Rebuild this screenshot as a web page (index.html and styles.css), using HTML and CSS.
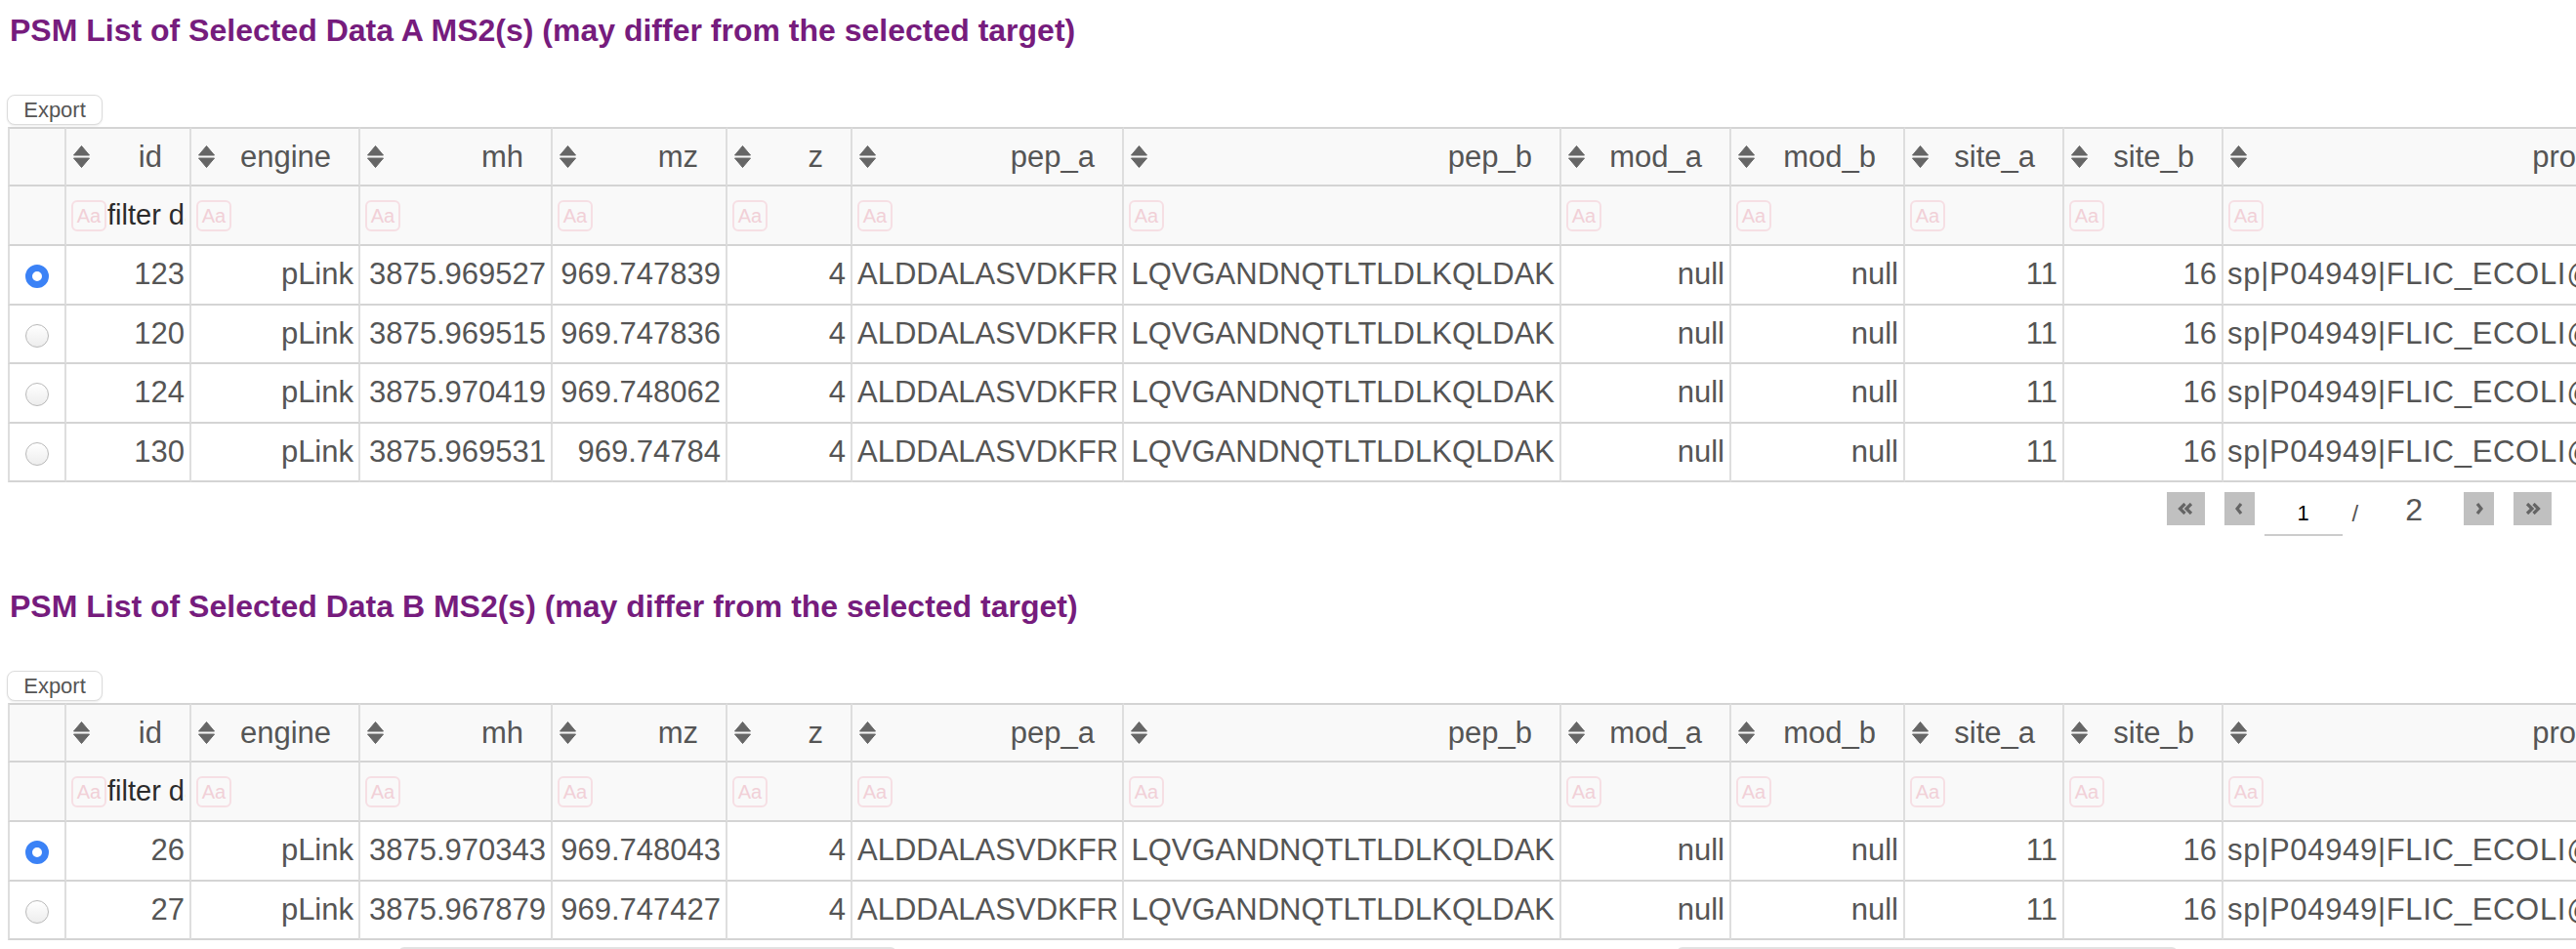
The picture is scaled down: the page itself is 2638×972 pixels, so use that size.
FILE: index.html
```html
<!DOCTYPE html>
<html>
<head>
<meta charset="utf-8">
<title>PSM List</title>
<link rel="stylesheet" href="styles.css">
</head>
<body>

<section class="panel">
  <h4 class="panel-title">PSM List of Selected Data A MS2(s) (may differ from the selected target)</h4>
  <button class="export-btn">Export</button>
  <div class="table-wrap">
    <table class="psm">
      <colgroup>
        <col class="c-sel"><col class="c-id"><col class="c-engine"><col class="c-mh"><col class="c-mz"><col class="c-z"><col class="c-pepa"><col class="c-pepb"><col class="c-moda"><col class="c-modb"><col class="c-sitea"><col class="c-siteb"><col class="c-pro">
      </colgroup>
      <thead>
        <tr class="head-row">
          <th></th>
          <th><div class="th-inner"><svg class="sort" viewBox="0 0 19 25"><path d="M9.5 1.5 L17.5 11 L1.5 11 Z"/><path d="M1.5 14 L17.5 14 L9.5 23.5 Z"/></svg><span class="lbl">id</span></div></th>
          <th><div class="th-inner"><svg class="sort" viewBox="0 0 19 25"><path d="M9.5 1.5 L17.5 11 L1.5 11 Z"/><path d="M1.5 14 L17.5 14 L9.5 23.5 Z"/></svg><span class="lbl">engine</span></div></th>
          <th><div class="th-inner"><svg class="sort" viewBox="0 0 19 25"><path d="M9.5 1.5 L17.5 11 L1.5 11 Z"/><path d="M1.5 14 L17.5 14 L9.5 23.5 Z"/></svg><span class="lbl">mh</span></div></th>
          <th><div class="th-inner"><svg class="sort" viewBox="0 0 19 25"><path d="M9.5 1.5 L17.5 11 L1.5 11 Z"/><path d="M1.5 14 L17.5 14 L9.5 23.5 Z"/></svg><span class="lbl">mz</span></div></th>
          <th><div class="th-inner"><svg class="sort" viewBox="0 0 19 25"><path d="M9.5 1.5 L17.5 11 L1.5 11 Z"/><path d="M1.5 14 L17.5 14 L9.5 23.5 Z"/></svg><span class="lbl">z</span></div></th>
          <th><div class="th-inner"><svg class="sort" viewBox="0 0 19 25"><path d="M9.5 1.5 L17.5 11 L1.5 11 Z"/><path d="M1.5 14 L17.5 14 L9.5 23.5 Z"/></svg><span class="lbl">pep_a</span></div></th>
          <th><div class="th-inner"><svg class="sort" viewBox="0 0 19 25"><path d="M9.5 1.5 L17.5 11 L1.5 11 Z"/><path d="M1.5 14 L17.5 14 L9.5 23.5 Z"/></svg><span class="lbl">pep_b</span></div></th>
          <th><div class="th-inner"><svg class="sort" viewBox="0 0 19 25"><path d="M9.5 1.5 L17.5 11 L1.5 11 Z"/><path d="M1.5 14 L17.5 14 L9.5 23.5 Z"/></svg><span class="lbl">mod_a</span></div></th>
          <th><div class="th-inner"><svg class="sort" viewBox="0 0 19 25"><path d="M9.5 1.5 L17.5 11 L1.5 11 Z"/><path d="M1.5 14 L17.5 14 L9.5 23.5 Z"/></svg><span class="lbl">mod_b</span></div></th>
          <th><div class="th-inner"><svg class="sort" viewBox="0 0 19 25"><path d="M9.5 1.5 L17.5 11 L1.5 11 Z"/><path d="M1.5 14 L17.5 14 L9.5 23.5 Z"/></svg><span class="lbl">site_a</span></div></th>
          <th><div class="th-inner"><svg class="sort" viewBox="0 0 19 25"><path d="M9.5 1.5 L17.5 11 L1.5 11 Z"/><path d="M1.5 14 L17.5 14 L9.5 23.5 Z"/></svg><span class="lbl">site_b</span></div></th>
          <th><div class="th-inner"><svg class="sort" viewBox="0 0 19 25"><path d="M9.5 1.5 L17.5 11 L1.5 11 Z"/><path d="M1.5 14 L17.5 14 L9.5 23.5 Z"/></svg><span class="lbl">protein</span></div></th>
        </tr>
        <tr class="filter-row">
          <td></td>
          <td><div class="f-inner"><span class="aa">Aa</span><span class="f-text">filter data...</span></div></td>
          <td><div class="f-inner"><span class="aa">Aa</span></div></td>
          <td><div class="f-inner"><span class="aa">Aa</span></div></td>
          <td><div class="f-inner"><span class="aa">Aa</span></div></td>
          <td><div class="f-inner"><span class="aa">Aa</span></div></td>
          <td><div class="f-inner"><span class="aa">Aa</span></div></td>
          <td><div class="f-inner"><span class="aa">Aa</span></div></td>
          <td><div class="f-inner"><span class="aa">Aa</span></div></td>
          <td><div class="f-inner"><span class="aa">Aa</span></div></td>
          <td><div class="f-inner"><span class="aa">Aa</span></div></td>
          <td><div class="f-inner"><span class="aa">Aa</span></div></td>
          <td><div class="f-inner"><span class="aa">Aa</span></div></td>
        </tr>
      </thead>
      <tbody>
        <tr><td class="sel"><span class="radio on"></span></td><td>123</td><td>pLink</td><td>3875.969527</td><td>969.747839</td><td>4</td><td>ALDDALASVDKFR</td><td>LQVGANDNQTLTLDLKQLDAK</td><td>null</td><td>null</td><td>11</td><td>16</td><td class="pro">sp|P04949|FLIC_ECOLI@sp|P04949|FLIC_ECOLI</td></tr>
        <tr><td class="sel"><span class="radio"></span></td><td>120</td><td>pLink</td><td>3875.969515</td><td>969.747836</td><td>4</td><td>ALDDALASVDKFR</td><td>LQVGANDNQTLTLDLKQLDAK</td><td>null</td><td>null</td><td>11</td><td>16</td><td class="pro">sp|P04949|FLIC_ECOLI@sp|P04949|FLIC_ECOLI</td></tr>
        <tr><td class="sel"><span class="radio"></span></td><td>124</td><td>pLink</td><td>3875.970419</td><td>969.748062</td><td>4</td><td>ALDDALASVDKFR</td><td>LQVGANDNQTLTLDLKQLDAK</td><td>null</td><td>null</td><td>11</td><td>16</td><td class="pro">sp|P04949|FLIC_ECOLI@sp|P04949|FLIC_ECOLI</td></tr>
        <tr><td class="sel"><span class="radio"></span></td><td>130</td><td>pLink</td><td>3875.969531</td><td>969.74784</td><td>4</td><td>ALDDALASVDKFR</td><td>LQVGANDNQTLTLDLKQLDAK</td><td>null</td><td>null</td><td>11</td><td>16</td><td class="pro">sp|P04949|FLIC_ECOLI@sp|P04949|FLIC_ECOLI</td></tr>
      </tbody>
    </table>
  </div>
  <div class="pager">
    <button class="pg-btn pg-wide"><svg class="chev2" viewBox="0 0 16 12"><polyline points="7.5,1 2.5,6 7.5,11"/><polyline points="14,1 9,6 14,11"/></svg></button>
    <button class="pg-btn pg-narrow pg-prev"><svg class="chev1" viewBox="0 0 8 12"><polyline points="6,1 2,6 6,11"/></svg></button>
    <input class="pg-input" type="text" value="1">
    <span class="pg-slash">/</span>
    <span class="pg-total">2</span>
    <button class="pg-btn pg-narrow pg-next"><svg class="chev1" viewBox="0 0 8 12"><polyline points="2,1 6,6 2,11"/></svg></button>
    <button class="pg-btn pg-wide pg-last"><svg class="chev2" viewBox="0 0 16 12"><polyline points="2,1 7,6 2,11"/><polyline points="8.5,1 13.5,6 8.5,11"/></svg></button>
  </div>
</section>

<section class="panel panel-b">
  <h4 class="panel-title">PSM List of Selected Data B MS2(s) (may differ from the selected target)</h4>
  <button class="export-btn">Export</button>
  <div class="table-wrap">
    <table class="psm">
      <colgroup>
        <col class="c-sel"><col class="c-id"><col class="c-engine"><col class="c-mh"><col class="c-mz"><col class="c-z"><col class="c-pepa"><col class="c-pepb"><col class="c-moda"><col class="c-modb"><col class="c-sitea"><col class="c-siteb"><col class="c-pro">
      </colgroup>
      <thead>
        <tr class="head-row">
          <th></th>
          <th><div class="th-inner"><svg class="sort" viewBox="0 0 19 25"><path d="M9.5 1.5 L17.5 11 L1.5 11 Z"/><path d="M1.5 14 L17.5 14 L9.5 23.5 Z"/></svg><span class="lbl">id</span></div></th>
          <th><div class="th-inner"><svg class="sort" viewBox="0 0 19 25"><path d="M9.5 1.5 L17.5 11 L1.5 11 Z"/><path d="M1.5 14 L17.5 14 L9.5 23.5 Z"/></svg><span class="lbl">engine</span></div></th>
          <th><div class="th-inner"><svg class="sort" viewBox="0 0 19 25"><path d="M9.5 1.5 L17.5 11 L1.5 11 Z"/><path d="M1.5 14 L17.5 14 L9.5 23.5 Z"/></svg><span class="lbl">mh</span></div></th>
          <th><div class="th-inner"><svg class="sort" viewBox="0 0 19 25"><path d="M9.5 1.5 L17.5 11 L1.5 11 Z"/><path d="M1.5 14 L17.5 14 L9.5 23.5 Z"/></svg><span class="lbl">mz</span></div></th>
          <th><div class="th-inner"><svg class="sort" viewBox="0 0 19 25"><path d="M9.5 1.5 L17.5 11 L1.5 11 Z"/><path d="M1.5 14 L17.5 14 L9.5 23.5 Z"/></svg><span class="lbl">z</span></div></th>
          <th><div class="th-inner"><svg class="sort" viewBox="0 0 19 25"><path d="M9.5 1.5 L17.5 11 L1.5 11 Z"/><path d="M1.5 14 L17.5 14 L9.5 23.5 Z"/></svg><span class="lbl">pep_a</span></div></th>
          <th><div class="th-inner"><svg class="sort" viewBox="0 0 19 25"><path d="M9.5 1.5 L17.5 11 L1.5 11 Z"/><path d="M1.5 14 L17.5 14 L9.5 23.5 Z"/></svg><span class="lbl">pep_b</span></div></th>
          <th><div class="th-inner"><svg class="sort" viewBox="0 0 19 25"><path d="M9.5 1.5 L17.5 11 L1.5 11 Z"/><path d="M1.5 14 L17.5 14 L9.5 23.5 Z"/></svg><span class="lbl">mod_a</span></div></th>
          <th><div class="th-inner"><svg class="sort" viewBox="0 0 19 25"><path d="M9.5 1.5 L17.5 11 L1.5 11 Z"/><path d="M1.5 14 L17.5 14 L9.5 23.5 Z"/></svg><span class="lbl">mod_b</span></div></th>
          <th><div class="th-inner"><svg class="sort" viewBox="0 0 19 25"><path d="M9.5 1.5 L17.5 11 L1.5 11 Z"/><path d="M1.5 14 L17.5 14 L9.5 23.5 Z"/></svg><span class="lbl">site_a</span></div></th>
          <th><div class="th-inner"><svg class="sort" viewBox="0 0 19 25"><path d="M9.5 1.5 L17.5 11 L1.5 11 Z"/><path d="M1.5 14 L17.5 14 L9.5 23.5 Z"/></svg><span class="lbl">site_b</span></div></th>
          <th><div class="th-inner"><svg class="sort" viewBox="0 0 19 25"><path d="M9.5 1.5 L17.5 11 L1.5 11 Z"/><path d="M1.5 14 L17.5 14 L9.5 23.5 Z"/></svg><span class="lbl">protein</span></div></th>
        </tr>
        <tr class="filter-row">
          <td></td>
          <td><div class="f-inner"><span class="aa">Aa</span><span class="f-text">filter data...</span></div></td>
          <td><div class="f-inner"><span class="aa">Aa</span></div></td>
          <td><div class="f-inner"><span class="aa">Aa</span></div></td>
          <td><div class="f-inner"><span class="aa">Aa</span></div></td>
          <td><div class="f-inner"><span class="aa">Aa</span></div></td>
          <td><div class="f-inner"><span class="aa">Aa</span></div></td>
          <td><div class="f-inner"><span class="aa">Aa</span></div></td>
          <td><div class="f-inner"><span class="aa">Aa</span></div></td>
          <td><div class="f-inner"><span class="aa">Aa</span></div></td>
          <td><div class="f-inner"><span class="aa">Aa</span></div></td>
          <td><div class="f-inner"><span class="aa">Aa</span></div></td>
          <td><div class="f-inner"><span class="aa">Aa</span></div></td>
        </tr>
      </thead>
      <tbody>
        <tr><td class="sel"><span class="radio on"></span></td><td>26</td><td>pLink</td><td>3875.970343</td><td>969.748043</td><td>4</td><td>ALDDALASVDKFR</td><td>LQVGANDNQTLTLDLKQLDAK</td><td>null</td><td>null</td><td>11</td><td>16</td><td class="pro">sp|P04949|FLIC_ECOLI@sp|P04949|FLIC_ECOLI</td></tr>
        <tr><td class="sel"><span class="radio"></span></td><td>27</td><td>pLink</td><td>3875.967879</td><td>969.747427</td><td>4</td><td>ALDDALASVDKFR</td><td>LQVGANDNQTLTLDLKQLDAK</td><td>null</td><td>null</td><td>11</td><td>16</td><td class="pro">sp|P04949|FLIC_ECOLI@sp|P04949|FLIC_ECOLI</td></tr>
      </tbody>
    </table>
  </div>
  <div class="below">
    <div class="below-box box-1"></div>
    <div class="below-box box-2"></div>
  </div>
</section>

</body>
</html>
```

FILE: styles.css
```css
html, body {
  margin: 0;
  padding: 0;
  background: #ffffff;
}

body {
  padding-left: 8px;
  font-family: "Liberation Sans", Arial, Helvetica, sans-serif;
  color: #555555;
  overflow: hidden;
}

.panel-title {
  margin: 12px 0 0 2px;
  font-size: 32px;
  line-height: 38px;
  font-weight: bold;
  color: #761c7d;
  white-space: nowrap;
}

.panel-b {
  margin-top: 52px;
}

.export-btn {
  display: block;
  margin: 47px 0 0 -1px;
  width: 98px;
  height: 31px;
  padding: 0;
  border: 1px solid #dcdcdc;
  border-radius: 8px;
  background: #ffffff;
  box-shadow: 0 1px 2px rgba(0, 0, 0, 0.08);
  font-family: "Liberation Sans", Arial, sans-serif;
  font-size: 22px;
  color: #555555;
}

.table-wrap {
  margin-top: 2px;
  overflow: hidden;
}

.psm {
  table-layout: fixed;
  border-collapse: separate;
  border-spacing: 0;
  width: 2710px;
  font-size: 31px;
  color: #555555;
}

.c-sel { width: 60px; }
.c-id { width: 128px; }
.c-engine { width: 173px; }
.c-mh { width: 197px; }
.c-mz { width: 179px; }
.c-z { width: 128px; }
.c-pepa { width: 278px; }
.c-pepb { width: 448px; }
.c-moda { width: 174px; }
.c-modb { width: 178px; }
.c-sitea { width: 163px; }
.c-siteb { width: 163px; }
.c-pro { width: 441px; }

.psm th,
.psm td {
  box-sizing: border-box;
  padding: 0 5px;
  border-right: 2px solid #dedede;
  border-bottom: 2px solid #d4d4d4;
  white-space: nowrap;
  overflow: hidden;
  text-align: right;
  vertical-align: middle;
  font-weight: normal;
}

.psm th:first-child,
.psm td:first-child {
  border-left: 2px solid #dedede;
}

.psm thead tr:first-child th {
  border-top: 2px solid #d4d4d4;
}

.head-row th {
  height: 61px;
  background: #f9f9f9;
  padding: 0;
}

.filter-row td {
  height: 61px;
  background: #f9f9f9;
  padding: 0;
}

.psm tbody td {
  height: 60.5px;
  background: #ffffff;
}

.th-inner {
  display: flex;
  align-items: center;
  padding: 0 28px 0 6px;
}

.sort {
  width: 19px;
  height: 25px;
  flex: none;
}

.sort path {
  fill: #666666;
  stroke: #666666;
  stroke-width: 1;
  stroke-linejoin: round;
}

.lbl {
  margin-left: auto;
  color: #555555;
}

.f-inner {
  display: flex;
  align-items: center;
  padding-left: 5px;
  overflow: hidden;
}

.aa {
  flex: none;
  box-sizing: border-box;
  width: 36px;
  height: 32px;
  border: 2px solid #f6dfe4;
  border-radius: 6px;
  font-size: 20px;
  line-height: 28px;
  text-align: center;
  color: #f1d0d7;
}

.f-text {
  flex: none;
  width: 80px;
  margin-left: 1px;
  overflow: hidden;
  font-size: 29px;
  color: #2b2b2b;
  white-space: nowrap;
}

.psm td.sel {
  text-align: center;
  padding: 0;
}

.psm td.pro {
  text-align: left;
  padding-left: 4px;
  letter-spacing: 0.7px;
}

.radio {
  display: inline-block;
  box-sizing: border-box;
  width: 24px;
  height: 24px;
  border-radius: 50%;
  border: 1px solid #b9b9b9;
  background: linear-gradient(#ffffff, #ededed);
  vertical-align: middle;
}

.radio.on {
  border: 7px solid #3b82f6;
  background: #ffffff;
}

.pager {
  display: flex;
  justify-content: flex-end;
  align-items: flex-start;
  margin: 10px 25px 0 0;
  height: 46px;
}

.pg-btn {
  display: flex;
  align-items: center;
  justify-content: center;
  height: 34px;
  padding: 0;
  border: none;
  background: #c0c0c0;
}

.pg-wide { width: 39px; }
.pg-narrow { width: 31px; }
.pg-prev { margin-left: 20px; }
.pg-next { margin-left: 42px; }
.pg-last { margin-left: 20px; }

.chev2 {
  width: 16px;
  height: 12px;
}

.chev1 {
  width: 8px;
  height: 12px;
}

.chev2 polyline,
.chev1 polyline {
  fill: none;
  stroke: #656565;
  stroke-width: 3.2;
  stroke-linecap: butt;
  stroke-linejoin: miter;
}

.pg-input {
  box-sizing: border-box;
  width: 80px;
  height: 45px;
  margin-left: 10px;
  padding: 0;
  border: none;
  border-bottom: 2px solid #cccccc;
  outline: none;
  background: transparent;
  font-family: "Liberation Sans", Arial, sans-serif;
  font-size: 22px;
  color: #000000;
  text-align: center;
}

.pg-slash {
  margin: 10px 0 0 10px;
  font-size: 24px;
  line-height: 24px;
  color: #555555;
}

.pg-total {
  margin: 2px 0 0 48px;
  font-size: 32px;
  line-height: 32px;
  color: #555555;
}

.below {
  display: flex;
  margin-top: 7px;
}

.below-box {
  box-sizing: border-box;
  height: 40px;
  border: 2px solid #e2e2e2;
  border-radius: 6px;
}

.box-1 {
  margin-left: 400px;
  width: 510px;
}

.box-2 {
  margin-left: 799px;
  width: 513px;
}
```
